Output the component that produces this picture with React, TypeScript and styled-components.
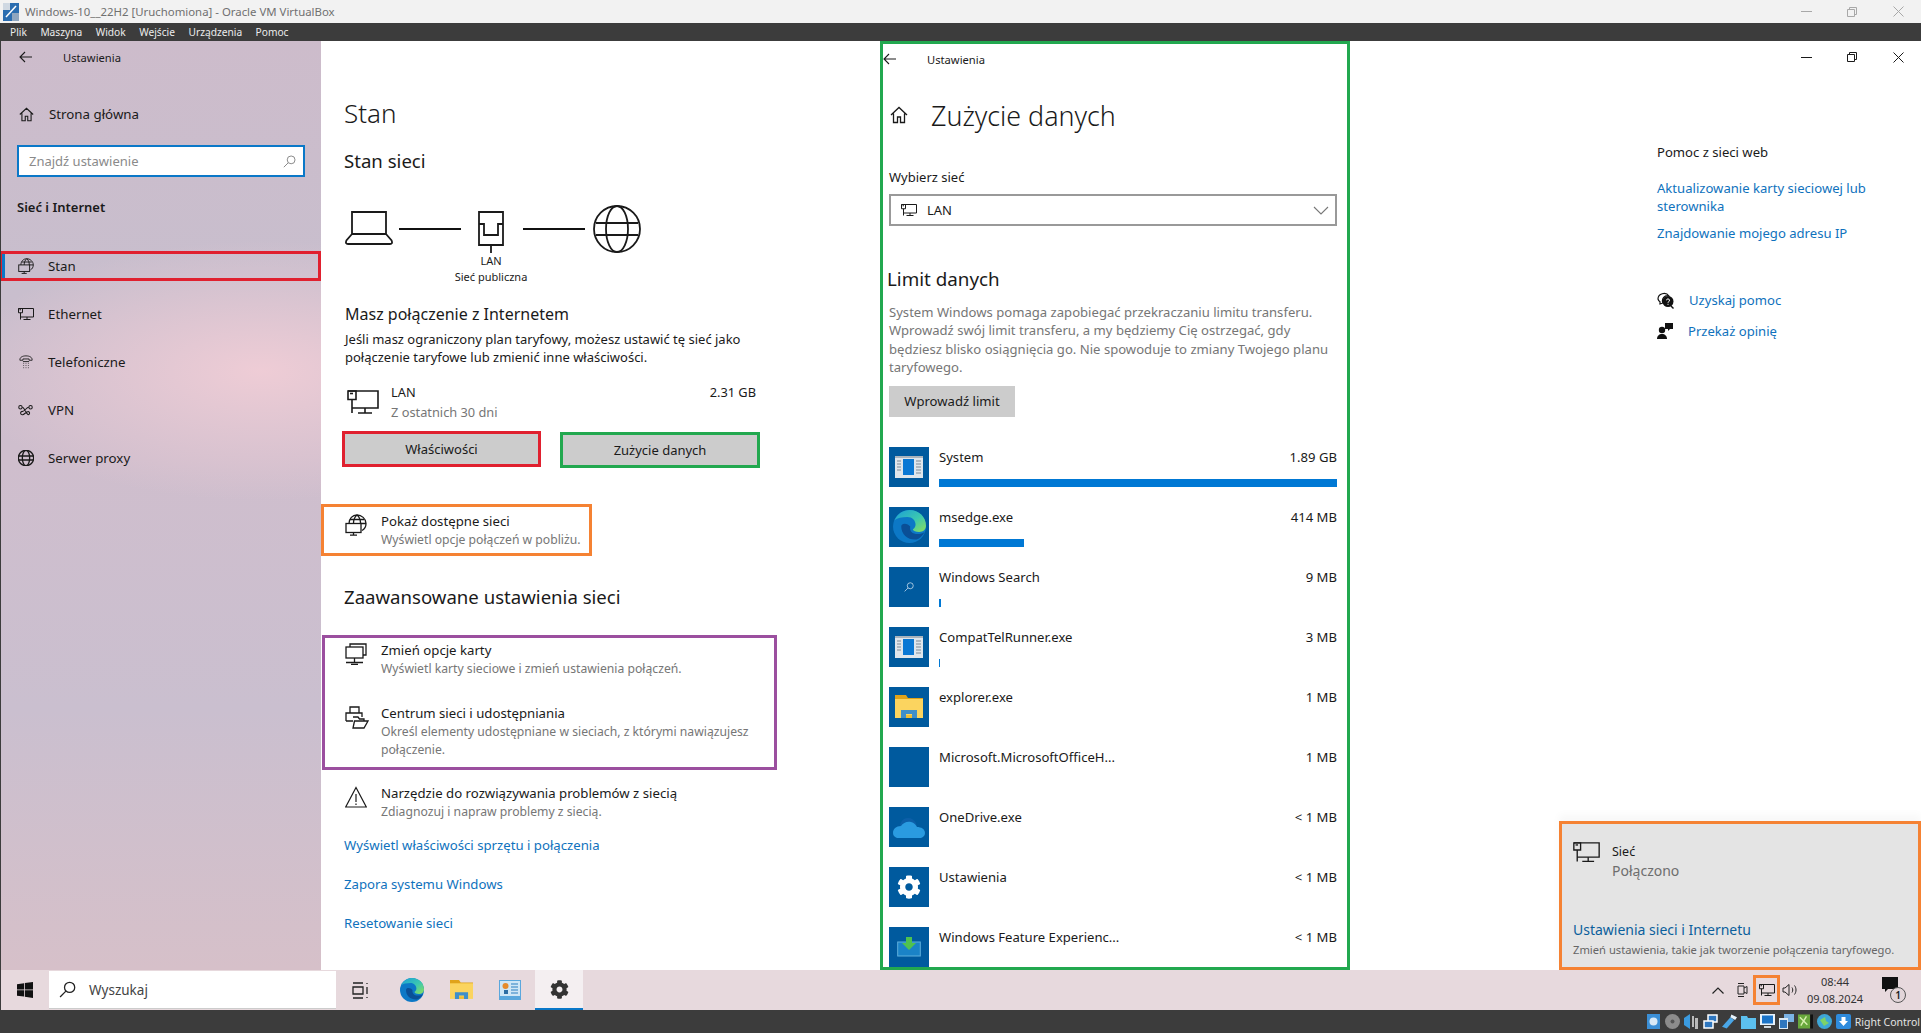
import React from 'react'
import styled, { createGlobalStyle } from 'styled-components'
import { FaCog } from 'react-icons/fa'

const FONT = `"Noto Sans", "Open Sans", "Liberation Sans", sans-serif`

const GlobalStyle = createGlobalStyle`
    html, body {
        margin: 0;
        padding: 0;
        width: 100%;
        height: 100%;
        overflow: hidden;
    }
    body {
        font-family: ${FONT};
        color: #1a1a1a;
        background: #3c3c3c;
    }
    * {
        box-sizing: border-box;
    }
    svg {
        display: block;
        flex: none;
    }
`

/* ---- VirtualBox frame ---- */
const Shell = styled.div`
    width: 1921px;
    height: 1033px;
    display: flex;
    flex-direction: column;
    overflow: hidden;
    background: #3c3c3c;
`
const TitleBar = styled.div`
    height: 23px;
    flex: none;
    background: #f2f2f2;
    color: #707070;
    display: flex;
    align-items: center;
    padding-left: 3px;
    font-size: 11.4px;
    gap: 6px;
`
const TitleText = styled.span`
    flex: 1;
`
const FrameControls = styled.div`
    display: flex;
    color: #a8a8a8;
`
const FrameControl = styled.span`
    width: 46px;
    height: 23px;
    display: flex;
    align-items: center;
    justify-content: center;
`
const MenuBar = styled.div`
    height: 18px;
    flex: none;
    background: #3c3c3c;
    color: #ececec;
    font-size: 10.2px;
    display: flex;
    align-items: center;
    gap: 13.5px;
    padding-left: 10px;
`
const Workspace = styled.div`
    flex: 1;
    min-height: 0;
    margin-left: 1px;
    display: flex;
    position: relative;
    background: #fff;
`

/* ---- settings sidebar ---- */
const Sidebar = styled.aside`
    width: 320px;
    flex: none;
    background:
        radial-gradient(ellipse 300px 130px at 260px 330px, rgba(240, 205, 214, .95), rgba(240, 205, 214, 0)),
        linear-gradient(180deg, #cdbccb 0%, #c8becd 25%, #cfbecd 45%, #cabfcf 72%, #d6c0c9 100%);
`
const SidebarHead = styled.div`
    height: 32px;
    display: flex;
    align-items: center;
    padding-left: 18px;
    font-size: 11.2px;
`
const BackSlot = styled.span`
    width: 44px;
    flex: none;
`
const HomeLink = styled.div`
    margin-top: 25px;
    height: 32px;
    display: flex;
    align-items: center;
    gap: 15px;
    padding-left: 18px;
    font-size: 13.3px;
`
const SearchBox = styled.div`
    margin: 15px 0 0 16px;
    width: 288px;
    height: 32px;
    background: #fff;
    border: 2.5px solid #0a78c8;
    display: flex;
    align-items: center;
    justify-content: space-between;
    padding: 0 7px 0 10px;
    color: #8a8a8a;
    font-size: 13px;
`
const SideGroup = styled.div`
    margin: 20px 0 0 16px;
    height: 20px;
    line-height: 20px;
    font-size: 13px;
    font-weight: 600;
`
const SideList = styled.nav`
    margin-top: 34px;
`
const SideItem = styled.div<{ $active?: boolean }>`
    height: ${p => (p.$active ? '30px' : '48px')};
    display: flex;
    align-items: center;
    gap: 14px;
    font-size: 13.3px;
    padding-left: ${p => (p.$active ? '13px' : '16px')};
    ${p => p.$active && `
        border: 3px solid #e0202f;
        border-left-width: 1px;
        margin-bottom: 9px;
        padding-left: 15px;
        position: relative;
        &::before {
            content: '';
            position: absolute;
            left: 0;
            top: 0;
            bottom: 0;
            width: 3px;
            background: #0a78c8;
        }
    `}
`
const SideIconSlot = styled.span`
    width: 17px;
    display: flex;
    justify-content: center;
    flex: none;
`

/* ---- status column ---- */
const MainPane = styled.main`
    width: 559px;
    flex: none;
`
const PageTitle = styled.h1`
    margin: 54px 0 0 23px;
    height: 36px;
    line-height: 36px;
    font-size: 26px;
    font-weight: 300;
`
const SectionTitle = styled.h2<{ $top: number }>`
    margin: ${p => p.$top}px 0 0 23px;
    height: 28px;
    line-height: 28px;
    font-size: 18.6px;
    font-weight: 400;
`
const Diagram = styled.div`
    margin: 30px 0 0 24px;
    height: 81px;
    display: flex;
    align-items: flex-start;
`
const DiagramNode = styled.div<{ $top?: number; $left: number }>`
    margin: ${p => p.$top ?? 0}px 0 0 ${p => p.$left}px;
    display: flex;
    flex-direction: column;
    align-items: center;
    width: min-content;
`
const DiagramLine = styled.span<{ $left: number }>`
    width: 62px;
    height: 2px;
    margin: 23px 0 0 ${p => p.$left}px;
    background: #111;
`
const NodeColumn = styled.div`
    width: 26px;
    display: flex;
    flex-direction: column;
    align-items: center;
`
const NodeLabel = styled.span`
    white-space: nowrap;
    font-size: 11px;
    line-height: 16px;
`
const ConnectedTitle = styled.h3`
    margin: 16px 0 0 24px;
    height: 24px;
    line-height: 24px;
    font-size: 16px;
    font-weight: 400;
`
const Description = styled.p`
    margin: 4px 0 0 24px;
    font-size: 13px;
    line-height: 18px;
    white-space: nowrap;
`
const UsageRow = styled.div`
    margin: 16px 0 0 26px;
    width: 409px;
    display: flex;
    font-size: 12.8px;
    line-height: 20px;
    gap: 12px;
`
const UsageIcon = styled.span`
    padding-top: 8px;
`
const UsageText = styled.div`
    flex: 1;
`
const Muted = styled.div`
    color: #767676;
`
const ButtonRow = styled.div`
    margin: 9px 0 0 21px;
    display: flex;
    gap: 19px;
`
const MarkedButton = styled.div<{ $tone: string; $width: number; $shift?: number }>`
    width: ${p => p.$width}px;
    height: 36px;
    margin-top: ${p => p.$shift ?? 0}px;
    background: #ccc;
    border: 3px solid ${p => p.$tone};
    display: flex;
    align-items: center;
    justify-content: center;
    font-size: 13px;
`
const OptionRow = styled.div`
    display: flex;
    gap: 14px;
`
const OptionIcon = styled.span`
    width: 22px;
    flex: none;
    padding-top: 3px;
`
const OptionTitle = styled.div`
    line-height: 20px;
    font-size: 13.2px;
    white-space: nowrap;
`
const OptionSub = styled.div`
    line-height: 18px;
    font-size: 12.2px;
    color: #767676;
    white-space: nowrap;
`
const OrangeBox = styled.div`
    margin-top: 36px;
    width: 271px;
    height: 52px;
    border: 3px solid #f58233;
    padding: 4px 0 0 21px;
`
const PurpleBox = styled.div`
    margin: 24px 0 0 1px;
    width: 455px;
    height: 135px;
    border: 3px solid #9b4f9f;
    padding: 2px 0 0 20px;
    display: flex;
    flex-direction: column;
    gap: 25px;
`
const PlainOption = styled.div`
    margin: 13px 0 0 24px;
`
const LinkStack = styled.div`
    margin: 14px 0 0 23px;
    display: flex;
    flex-direction: column;
    gap: 19px;
`
const PageLink = styled.a`
    color: #0f72bd;
    font-size: 13.2px;
    line-height: 20px;
`

/* ---- data usage window ---- */
const UsagePane = styled.section`
    width: 470px;
    flex: none;
    height: 100%;
    overflow: hidden;
    border: 3px solid #22a84f;
    padding: 0 10px 0 6px;
    font-size: 13.1px;
`
const UsageHead = styled.div`
    height: 32px;
    margin-left: -6px;
    padding-bottom: 2px;
    display: flex;
    align-items: center;
    font-size: 11.2px;
`
const UsageTitleRow = styled.div`
    margin-top: 20px;
    height: 38px;
    display: flex;
    align-items: center;
    padding-left: 1px;
    gap: 23px;
`
const UsageTitle = styled.h1`
    margin: 0;
    font-size: 26.8px;
    font-weight: 300;
`
const FieldLabel = styled.div`
    margin-top: 33px;
    line-height: 20px;
    font-size: 13px;
`
const SelectBox = styled.div`
    margin-top: 7px;
    height: 32px;
    border: 2px solid #999;
    display: flex;
    align-items: center;
    gap: 10px;
    padding: 0 6px 0 10px;
    font-size: 13px;
`
const SelectValue = styled.span`
    flex: 1;
`
const LimitTitle = styled.h2`
    margin: 39px 0 0 -2px;
    line-height: 28px;
    font-size: 18.8px;
    font-weight: 400;
`
const LimitText = styled.p`
    margin: 10px 0 0;
    color: #767676;
    font-size: 13.1px;
    line-height: 18.4px;
    white-space: nowrap;
`
const LimitButton = styled.div`
    margin-top: 9px;
    width: 126px;
    height: 31px;
    background: #ccc;
    display: flex;
    align-items: center;
    justify-content: center;
`
const AppList = styled.div`
    margin-top: 30px;
    display: flex;
    flex-direction: column;
    gap: 20px;
`
const AppRow = styled.div`
    display: flex;
    gap: 10px;
    height: 40px;
    flex: none;
`
const AppTile = styled.span`
    width: 40px;
    height: 40px;
    flex: none;
    background: #005a9e;
    display: flex;
    align-items: center;
    justify-content: center;
    color: #fff;
`
const AppBody = styled.div`
    flex: 1;
    display: flex;
    flex-direction: column;
    justify-content: space-between;
`
const AppLine = styled.div`
    display: flex;
    justify-content: space-between;
    line-height: 20px;
`
const AppBar = styled.div`
    height: 8px;
    background: #0078d4;
`

/* ---- help column ---- */
const HelpPane = styled.aside`
    flex: 1;
    min-width: 0;
    font-size: 13.1px;
`
const WindowControls = styled.div`
    height: 32px;
    display: flex;
    justify-content: flex-end;
`
const WindowControl = styled.span`
    width: 46px;
    display: flex;
    align-items: center;
    justify-content: center;
`
const HelpColumn = styled.div`
    margin: 69px 0 0 307px;
    width: 230px;
`
const HelpHeading = styled.div`
    line-height: 20px;
    margin-bottom: 17px;
`
const HelpLink = styled.a`
    display: block;
    color: #0f72bd;
    line-height: 18px;
    margin-bottom: 9px;
`
const HelpActions = styled.div`
    margin-top: 48px;
    display: flex;
    flex-direction: column;
    gap: 11px;
`
const HelpAction = styled.div`
    display: flex;
    align-items: center;
    gap: 15px;
    height: 20px;
    color: #0f72bd;
`

/* ---- network flyout ---- */
const Flyout = styled.div`
    position: absolute;
    right: 0;
    bottom: 0;
    width: 362px;
    height: 149px;
    border: 3px solid #f58233;
    background: #e4e4e4;
    box-shadow: 0 -6px 8px rgba(0, 0, 0, .03);
    padding: 0 0 0 11px;
    display: flex;
    flex-direction: column;
`
const FlyoutTop = styled.div`
    margin-top: 18px;
    display: flex;
    gap: 12px;
`
const FlyoutName = styled.div`
    font-size: 12.5px;
    line-height: 19px;
`
const FlyoutState = styled.div`
    font-size: 14px;
    line-height: 20px;
    color: #6e6e6e;
`
const FlyoutLink = styled.a`
    margin-top: auto;
    color: #0b5f9c;
    font-size: 14px;
    line-height: 20px;
`
const FlyoutHint = styled.div`
    margin: 0 0 7px;
    color: #666;
    font-size: 11.2px;
    line-height: 20px;
    white-space: nowrap;
`

/* ---- windows taskbar ---- */
const Taskbar = styled.footer`
    height: 40px;
    flex: none;
    margin-left: 1px;
    background: #e7d9dd;
    display: flex;
    align-items: center;
`
const StartButton = styled.span`
    width: 48px;
    display: flex;
    justify-content: center;
`
const TaskSearch = styled.div`
    width: 287px;
    height: 38px;
    background: #fff;
    border-bottom: 1px solid #ccc;
    display: flex;
    align-items: center;
    gap: 13px;
    padding-left: 10px;
    color: #444;
    font-size: 13.5px;
`
const TaskIcons = styled.div`
    margin-left: 4px;
    display: flex;
    gap: 1px;
`
const TaskIcon = styled.span<{ $active?: boolean }>`
    width: 48px;
    height: 40px;
    display: flex;
    align-items: center;
    justify-content: center;
    color: #333;
    ${p => p.$active && `
        background: #f4eff1;
        border-bottom: 2px solid #0a78c8;
    `}
`
const Tray = styled.div`
    margin-left: auto;
    display: flex;
    align-items: center;
    height: 40px;
    padding-right: 3px;
`
const TrayIcon = styled.span<{ $left: number }>`
    margin-left: ${p => p.$left}px;
    color: #222;
`
const TrayMark = styled.span`
    margin-left: 5px;
    width: 27px;
    height: 30px;
    border: 3px solid #f58233;
    display: flex;
    align-items: center;
    justify-content: center;
`
const Clock = styled.div`
    margin-left: 8px;
    width: 58px;
    text-align: center;
    font-size: 11px;
    line-height: 17px;
    color: #333;
`
const NoticeSlot = styled.span`
    margin: 0 12px 0 18px;
    position: relative;
    width: 24px;
    height: 26px;
`
const NoticeBadge = styled.span`
    position: absolute;
    right: 0;
    bottom: 0;
    width: 16px;
    height: 16px;
    border-radius: 50%;
    border: 1px solid #555;
    background: #e2d5d9;
    display: flex;
    align-items: center;
    justify-content: center;
    font-size: 10px;
    font-weight: 600;
`

/* ---- VirtualBox status bar ---- */
const StatusBar = styled.div`
    height: 23px;
    flex: none;
    background: #3c3c3c;
    display: flex;
    align-items: center;
    justify-content: flex-end;
    gap: 4px;
    color: #e4e4e4;
    font-size: 10.5px;
    padding-right: 1px;
`
const HostKey = styled.span`
    white-space: nowrap;
`

type IconProps = { w: number; h?: number }

const BackArrow = () => (
    <svg width="13" height="12" viewBox="0 0 13 12" fill="none" stroke="currentColor" strokeWidth="1.1">
        <path d="M13 6H1M6 1L1 6l5 5" />
    </svg>
)
const HomeIcon = ({ w }: IconProps) => (
    <svg width={w} height={w} viewBox="0 0 18 18" fill="none" stroke="currentColor" strokeWidth="1.3">
        <path d="M1 9L9 1.5 17 9M3.5 7.5V16.5H7.5V11H10.5V16.5H14.5V7.5" />
    </svg>
)
const SearchGlyph = ({ w, color }: IconProps & { color: string }) => (
    <svg width={w} height={w} viewBox="0 0 16 16" fill="none" stroke={color} strokeWidth="1.2">
        <circle cx="10" cy="6" r="4.8" />
        <path d="M6.5 9.5L1 15" />
    </svg>
)
const StatusIcon = ({ w }: IconProps) => (
    <svg width={w} height={w} viewBox="0 0 22 22" fill="none" stroke="currentColor" strokeWidth="1.3">
        <path d="M4 9.5C4 4.5 7.5 1 12 1s9 3.5 9 8.500c0 3-1.400 5.600-4 7" />
        <path d="M5 5.500h14M12 1c-2.500 2-3.500 5-3.500 8.500M12 1c2.500 2 3.500 5 3.500 8.500M16 9.500h5" />
        <rect x="1" y="9.500" width="15" height="9" />
        <path d="M8.500 18.500V21M5 21.200h7" />
    </svg>
)
const EthernetIcon = ({ w }: IconProps) => (
    <svg width={w} height={(w * 24) / 32} viewBox="0 0 32 24" fill="none" stroke="currentColor" strokeWidth={w > 20 ? 1.6 : 2}>
        <path d="M1 1H31V18H5" />
        <path d="M1 1H9V9.500H1zM5 9.500V23M18 18V23M11 23H25" />
        <path d="M3 3.500h3" />
    </svg>
)
const DialIcon = ({ w }: IconProps) => (
    <svg width={w} height={w} viewBox="0 0 16 16" fill="none" stroke="currentColor" strokeWidth="1">
        <path d="M1 5.500C1 2.500 4 1 8 1s7 1.500 7 4.500V6h-3.500V4.500h-7V6H1z" />
        <path d="M4.500 7.500h7M5 9.500h.8M7.600 9.500h.8M10.200 9.500h.8M5 12h.8M7.600 12h.8M10.200 12h.8M5 14.500h.8M7.600 14.500h.8M10.200 14.500h.8" />
    </svg>
)
const VpnIcon = ({ w }: IconProps) => (
    <svg width={w} height={w} viewBox="0 0 16 16" fill="none" stroke="currentColor" strokeWidth="1.1">
        <circle cx="2.600" cy="4.500" r="1.800" />
        <circle cx="13.400" cy="4.500" r="1.800" />
        <path d="M4.500 4.500C7 4.500 9 12.500 11 12.500a1.800 1.800 0 0 0 0-3.500C9 9 6.500 12.500 5 12.500a1.800 1.800 0 1 1 0-3.500C7 9 9 4.500 11.500 4.500" />
    </svg>
)
const GlobeIcon = ({ w, sw }: IconProps & { sw: number }) => (
    <svg width={w} height={w} viewBox="0 0 48 48" fill="none" stroke="currentColor" strokeWidth={sw}>
        <circle cx="24" cy="24" r="23" />
        <ellipse cx="24" cy="24" rx="11" ry="23" />
        <path d="M3 18H45M3 30H45" />
    </svg>
)
const LaptopIcon = () => (
    <svg width="48" height="34" viewBox="0 0 48 34" fill="none" stroke="currentColor" strokeWidth="1.8">
        <path d="M7 1H41V23H7z" />
        <path d="M7 23L1.400 29.500Q0 33 3 33H45Q48 33 46.600 29.500L41 23" />
    </svg>
)
const AdapterIcon = () => (
    <svg width="26" height="42" viewBox="0 0 26 42" fill="none" stroke="currentColor" strokeWidth="1.8">
        <path d="M1 1H25V34H1zM1 13H6V24H20V13H25M13 34V42" />
    </svg>
)
const AdapterOptionsIcon = ({ w }: IconProps) => (
    <svg width={w} height={w} viewBox="0 0 22 22" fill="none" stroke="currentColor" strokeWidth="1.3">
        <path d="M5 4V1H21V12H18" />
        <rect x="1" y="4" width="17" height="11" />
        <path d="M9.500 15V19M1 19.500H18M6 21.500H13" />
    </svg>
)
const SharingIcon = ({ w }: IconProps) => (
    <svg width={w} height={w} viewBox="0 0 24 24" fill="none" stroke="currentColor" strokeWidth="1.3">
        <path d="M5 7V1H14V7M1 15V7H17V11M1 15H8" />
        <path d="M8 11H13L14.500 13H19V15H9.500L8 22H19L23 15H19" />
    </svg>
)
const WarningIcon = ({ w }: IconProps) => (
    <svg width={w} height={w} viewBox="0 0 22 22" fill="none" stroke="currentColor" strokeWidth="1.2">
        <path d="M11 1.500L21.300 21H.7zM11 8v8M11 17.500v1.600" />
    </svg>
)
const ChevronIcon = () => (
    <svg width="16" height="9" viewBox="0 0 16 9" fill="none" stroke="#777" strokeWidth="1.1">
        <path d="M1 1l7 7 7-7" />
    </svg>
)
const AppWindowIcon = () => (
    <svg width="28" height="22" viewBox="0 0 28 22">
        <rect width="28" height="22" fill="#dfe6ec" />
        <rect width="28" height="2" fill="#aab4bd" />
        <rect x="8" y="3" width="11" height="16" fill="#0a78d4" />
        <path d="M2 5h4M2 8h4M2 11h4M2 14h4M21 5h5M21 8h5M21 11h5M21 14h5M21 17h5" stroke="#7f8b96" strokeWidth="1" />
    </svg>
)
const EdgeLogo = ({ w }: IconProps) => (
    <svg width={w} height={w} viewBox="0 0 24 24">
        <defs>
            <linearGradient id="edgeTop" x1="0" y1="0" x2="1" y2="1">
                <stop offset="0" stopColor="#1b9ed8" />
                <stop offset=".55" stopColor="#3bc8b0" />
                <stop offset="1" stopColor="#8ee05a" />
            </linearGradient>
        </defs>
        <circle cx="12" cy="12" r="12" fill="#0c78c6" />
        <path d="M1 7.500C3.500 2.500 7.500 0 12 0c7 0 12 5 12 11.500 0 2.600-2 4.500-5 4.500-2.500 0-4.300-.8-4.600-2 1.300-.8 2-2 2-3.500C16.400 7.500 14 5 10.500 5 6.500 5 3 5.700 1 7.500z" fill="url(#edgeTop)" />
        <path d="M6 12c0 6 5 10 11 9.500 2-.5 4.500-2.500 6-5.500-1.500 1-3 1.500-5 1.500-4 0-6-2-5.500-5.500C11 9.500 6 9 6 12z" fill="#0a4f96" />
    </svg>
)
const FolderLogo = ({ w }: IconProps) => (
    <svg width={w} height={(w * 24) / 28} viewBox="0 0 28 24">
        <path d="M0 0H11L13 3H28V5H0z" fill="#e0a31a" />
        <path d="M0 4H28V23H0z" fill="#fbd45f" />
        <path d="M6 23V15H22V23H17V19H11V23z" fill="#3f8fca" />
        <rect x="11" y="20" width="6" height="3" fill="#f0bd34" />
    </svg>
)
const CloudLogo = () => (
    <svg width="32" height="22" viewBox="0 0 32 22">
        <path d="M7 14C6 8 9 2 15 2c4 0 6 2 8 5l1 6z" fill="#0c5fa8" />
        <path d="M0 17c0-4 3-7 8-7 2-3 6-5 10-4 3 .5 5 3 6 5 4 0 8 2 8 6 0 3-2 4-4 5H4c-2-1-4-2-4-5z" fill="#2a9be0" />
    </svg>
)
const FeatureLogo = () => (
    <svg width="24" height="20" viewBox="0 0 24 20" fill="none">
        <rect x=".7" y="5" width="22.600" height="14" fill="#1a83c7" stroke="#5fb0dc" strokeWidth="1" />
        <path d="M9 0h6v6h4l-7 7-7-7h4z" fill="#4fc24f" />
    </svg>
)
const ControlPanelLogo = () => (
    <svg width="22" height="20" viewBox="0 0 22 20">
        <rect width="22" height="20" fill="#5aa7dd" />
        <rect x="1" y="1" width="20" height="15" fill="#cfe6f6" />
        <circle cx="6.500" cy="6" r="3" fill="#e58b2d" />
        <rect x="5" y="10" width="4" height="4" fill="#2c6da4" />
        <path d="M12 4h7M12 7h7M12 10h7M12 13h7" stroke="#2c7fc0" strokeWidth="1.2" />
    </svg>
)
const WindowsLogo = () => (
    <svg width="16" height="16" viewBox="0 0 16 16" fill="#111">
        <path d="M0 2.300L7 1.300V7.500H0zM7.800 1.100L16 0V7.500H7.800zM0 8.300H7V14.600L0 13.700zM7.800 8.300H16V16L7.800 14.800z" />
    </svg>
)
const TaskViewIcon = () => (
    <svg width="17" height="17" viewBox="0 0 17 17" fill="none" stroke="#222" strokeWidth="1.3">
        <path d="M1 1H11M1 16H11M1 5H11V12H1zM15 1v1M15 5v7M15 15v1" />
    </svg>
)
const HelpChatIcon = () => (
    <svg width="17" height="17" viewBox="0 0 17 17">
        <path d="M1 7a6 5.500 0 0 1 11-3 5 5 0 0 0-6 7L3 12V9.800A5 5 0 0 1 1 7z" fill="none" stroke="#111" strokeWidth="1.2" />
        <circle cx="11" cy="9.500" r="5.500" fill="#111" />
        <path d="M14 14l2.500 2.500" stroke="#111" strokeWidth="1.4" />
        <path d="M9.500 8.300a1.500 1.500 0 1 1 2 1.500c-.5.200-.5.500-.5 1M11 11.800v1" stroke="#fff" strokeWidth="1" fill="none" />
    </svg>
)
const FeedbackIcon = () => (
    <svg width="16" height="16" viewBox="0 0 16 16" fill="#111">
        <circle cx="5" cy="7" r="3.200" />
        <path d="M0 16c0-3 2-5 5-5s5 2 5 5z" />
        <path d="M8 0h8v6h-3l-2 2V6H8z" />
    </svg>
)
const MinimizeGlyph = () => (
    <svg width="11" height="1" viewBox="0 0 11 1"><rect width="11" height="1" fill="currentColor" /></svg>
)
const RestoreGlyph = () => (
    <svg width="10" height="10" viewBox="0 0 10 10" fill="none" stroke="currentColor">
        <path d="M.5 2.500h7v7h-7zM2.500 2.500v-2h7v7h-2" />
    </svg>
)
const CloseGlyph = () => (
    <svg width="11" height="11" viewBox="0 0 11 11" fill="none" stroke="currentColor">
        <path d="M.5.500l10 10M10.500.500l-10 10" />
    </svg>
)
const VmLogo = () => (
    <svg width="16" height="18" viewBox="0 0 16 18">
        <rect width="16" height="18" fill="#2a6db0" />
        <path d="M0 0h7v7H0z" fill="#cfd8e2" />
        <path d="M9 10h7v8H9z" fill="#8fa6bf" />
        <path d="M3 14L13 3" stroke="#fff" strokeWidth="1.5" />
    </svg>
)
const VmStatusIcons = () => (
    <>
        <svg width="15" height="15" viewBox="0 0 15 15"><rect x="1" width="13" height="15" fill="#3b8fd6" /><circle cx="7.500" cy="7.500" r="4" fill="#d8e9f6" /></svg>
        <svg width="15" height="15" viewBox="0 0 15 15"><circle cx="7.500" cy="7.500" r="7.500" fill="#8c8c8c" /><circle cx="7.500" cy="7.500" r="2" fill="#555" /></svg>
        <svg width="15" height="15" viewBox="0 0 15 15"><path d="M0 4L6 0v15L0 11z" fill="#3b9be0" /><rect x="8" y="2" width="2" height="11" fill="#bbb" /><rect x="11" y="4" width="3" height="11" fill="#bbb" /></svg>
        <svg width="15" height="15" viewBox="0 0 15 15" fill="none" stroke="#fff" strokeWidth="1.5"><rect x="5" y="1" width="9" height="7" fill="#2f77bf" /><rect x="1" y="7" width="9" height="7" fill="#2f77bf" /></svg>
        <svg width="15" height="15" viewBox="0 0 16 15"><path d="M0 13L9 3l4 3-8 9z" fill="#4aa6e6" /><path d="M10 0l6 3-2 3-5-3z" fill="#e8f4fc" /></svg>
        <svg width="15" height="15" viewBox="0 0 15 15"><path d="M0 2h6l1 2h8v11H0z" fill="#5cc0ee" /></svg>
        <svg width="15" height="15" viewBox="0 0 15 15"><rect width="15" height="11" fill="#e8f2fa" /><rect x="2" y="1.500" width="11" height="8" fill="#1b74c8" /><rect x="4" y="12" width="7" height="2" fill="#d0d8de" /></svg>
        <svg width="15" height="15" viewBox="0 0 15 15"><rect x="5" width="10" height="8" fill="#7ab2e4" /><rect y="4" width="9" height="11" fill="#dbe9f5" /><rect x="1" y="6" width="7" height="8" fill="#2f77bf" /></svg>
        <svg width="15" height="15" viewBox="0 0 16 15"><rect width="13" height="15" fill="#68a83c" /><path d="M2 3l8 8M9 2L3 12" stroke="#d8f0b0" strokeWidth="1.5" /><rect x="13" width="3" height="15" fill="#111" /></svg>
        <svg width="15" height="15" viewBox="0 0 15 15"><circle cx="7.500" cy="7.500" r="7.500" fill="#3ea7d8" /><path d="M3 6l5-3 1 4 3 2-5 3z" fill="#7ed268" /></svg>
        <svg width="15" height="15" viewBox="0 0 15 15"><rect width="15" height="15" rx="2" fill="#2e8bdc" /><path d="M5.500 3h4v4h2.500l-4.500 5L3 7h2.500z" fill="#fff" /></svg>
    </>
)

const apps = [
    { name: 'System', size: '1.89 GB', bar: 398, tile: <AppWindowIcon /> },
    { name: 'msedge.exe', size: '414 MB', bar: 85, tile: <EdgeLogo w={33} /> },
    { name: 'Windows Search', size: '9 MB', bar: 2, tile: <SearchGlyph w={10} color="#cfe2f2" /> },
    { name: 'CompatTelRunner.exe', size: '3 MB', bar: 1, tile: <AppWindowIcon /> },
    { name: 'explorer.exe', size: '1 MB', tile: <FolderLogo w={28} /> },
    { name: 'Microsoft.MicrosoftOfficeH...', size: '1 MB' },
    { name: 'OneDrive.exe', size: '< 1 MB', tile: <CloudLogo /> },
    { name: 'Ustawienia', size: '< 1 MB', tile: <FaCog size={24} /> },
    { name: 'Windows Feature Experienc...', size: '< 1 MB', tile: <FeatureLogo /> },
]

function App() {
    return (
        <>
            <GlobalStyle />
            <Shell>
                <TitleBar>
                    <VmLogo />
                    <TitleText>Windows-10__22H2 [Uruchomiona] - Oracle VM VirtualBox</TitleText>
                    <FrameControls>
                        <FrameControl><MinimizeGlyph /></FrameControl>
                        <FrameControl><RestoreGlyph /></FrameControl>
                        <FrameControl><CloseGlyph /></FrameControl>
                    </FrameControls>
                </TitleBar>
                <MenuBar>
                    <span>Plik</span>
                    <span>Maszyna</span>
                    <span>Widok</span>
                    <span>Wejście</span>
                    <span>Urządzenia</span>
                    <span>Pomoc</span>
                </MenuBar>
                <Workspace>
                    <Sidebar>
                        <SidebarHead>
                            <BackSlot><BackArrow /></BackSlot>
                            Ustawienia
                        </SidebarHead>
                        <HomeLink><HomeIcon w={15} />Strona główna</HomeLink>
                        <SearchBox>
                            Znajdź ustawienie
                            <SearchGlyph w={13} color="#888" />
                        </SearchBox>
                        <SideGroup>Sieć i Internet</SideGroup>
                        <SideList>
                            <SideItem $active>
                                <SideIconSlot><StatusIcon w={16} /></SideIconSlot>Stan
                            </SideItem>
                            <SideItem><SideIconSlot><EthernetIcon w={16} /></SideIconSlot>Ethernet</SideItem>
                            <SideItem><SideIconSlot><DialIcon w={14} /></SideIconSlot>Telefoniczne</SideItem>
                            <SideItem><SideIconSlot><VpnIcon w={15} /></SideIconSlot>VPN</SideItem>
                            <SideItem><SideIconSlot><GlobeIcon w={16} sw={4} /></SideIconSlot>Serwer proxy</SideItem>
                        </SideList>
                    </Sidebar>

                    <MainPane>
                        <PageTitle>Stan</PageTitle>
                        <SectionTitle $top={16}>Stan sieci</SectionTitle>
                        <Diagram>
                            <DiagramNode $top={6} $left={0}><LaptopIcon /></DiagramNode>
                            <DiagramLine $left={6} />
                            <DiagramNode $top={6} $left={17}>
                                <NodeColumn>
                                    <AdapterIcon />
                                    <NodeLabel>LAN</NodeLabel>
                                    <NodeLabel>Sieć publiczna</NodeLabel>
                                </NodeColumn>
                            </DiagramNode>
                            <DiagramLine $left={19} />
                            <DiagramNode $left={8}><GlobeIcon w={48} sw={1.8} /></DiagramNode>
                        </Diagram>
                        <ConnectedTitle>Masz połączenie z Internetem</ConnectedTitle>
                        <Description>
                            Jeśli masz ograniczony plan taryfowy, możesz ustawić tę sieć jako<br />
                            połączenie taryfowe lub zmienić inne właściwości.
                        </Description>
                        <UsageRow>
                            <UsageIcon><EthernetIcon w={32} /></UsageIcon>
                            <UsageText>
                                <div>LAN</div>
                                <Muted>Z ostatnich 30 dni</Muted>
                            </UsageText>
                            <span>2.31 GB</span>
                        </UsageRow>
                        <ButtonRow>
                            <MarkedButton $tone="#e0202f" $width={199}>Właściwości</MarkedButton>
                            <MarkedButton $tone="#22a84f" $width={200} $shift={1}>Zużycie danych</MarkedButton>
                        </ButtonRow>
                        <OrangeBox>
                            <OptionRow>
                                <OptionIcon><StatusIcon w={22} /></OptionIcon>
                                <div>
                                    <OptionTitle>Pokaż dostępne sieci</OptionTitle>
                                    <OptionSub>Wyświetl opcje połączeń w pobliżu.</OptionSub>
                                </div>
                            </OptionRow>
                        </OrangeBox>
                        <SectionTitle $top={27}>Zaawansowane ustawienia sieci</SectionTitle>
                        <PurpleBox>
                            <OptionRow>
                                <OptionIcon><AdapterOptionsIcon w={22} /></OptionIcon>
                                <div>
                                    <OptionTitle>Zmień opcje karty</OptionTitle>
                                    <OptionSub>Wyświetl karty sieciowe i zmień ustawienia połączeń.</OptionSub>
                                </div>
                            </OptionRow>
                            <OptionRow>
                                <OptionIcon><SharingIcon w={24} /></OptionIcon>
                                <div>
                                    <OptionTitle>Centrum sieci i udostępniania</OptionTitle>
                                    <OptionSub>
                                        Określ elementy udostępniane w sieciach, z którymi nawiązujesz<br />
                                        połączenie.
                                    </OptionSub>
                                </div>
                            </OptionRow>
                        </PurpleBox>
                        <PlainOption>
                            <OptionRow>
                                <OptionIcon><WarningIcon w={22} /></OptionIcon>
                                <div>
                                    <OptionTitle>Narzędzie do rozwiązywania problemów z siecią</OptionTitle>
                                    <OptionSub>Zdiagnozuj i napraw problemy z siecią.</OptionSub>
                                </div>
                            </OptionRow>
                        </PlainOption>
                        <LinkStack>
                            <PageLink>Wyświetl właściwości sprzętu i połączenia</PageLink>
                            <PageLink>Zapora systemu Windows</PageLink>
                            <PageLink>Resetowanie sieci</PageLink>
                        </LinkStack>
                    </MainPane>

                    <UsagePane>
                        <UsageHead>
                            <BackSlot><BackArrow /></BackSlot>
                            Ustawienia
                        </UsageHead>
                        <UsageTitleRow>
                            <HomeIcon w={18} />
                            <UsageTitle>Zużycie danych</UsageTitle>
                        </UsageTitleRow>
                        <FieldLabel>Wybierz sieć</FieldLabel>
                        <SelectBox>
                            <EthernetIcon w={16} />
                            <SelectValue>LAN</SelectValue>
                            <ChevronIcon />
                        </SelectBox>
                        <LimitTitle>Limit danych</LimitTitle>
                        <LimitText>
                            System Windows pomaga zapobiegać przekraczaniu limitu transferu.<br />
                            Wprowadź swój limit transferu, a my będziemy Cię ostrzegać, gdy<br />
                            będziesz blisko osiągnięcia go. Nie spowoduje to zmiany Twojego planu<br />
                            taryfowego.
                        </LimitText>
                        <LimitButton>Wprowadź limit</LimitButton>
                        <AppList>
                            {apps.map(app => (
                                <AppRow key={app.name}>
                                    <AppTile>{app.tile}</AppTile>
                                    <AppBody>
                                        <AppLine>
                                            <span>{app.name}</span>
                                            <span>{app.size}</span>
                                        </AppLine>
                                        {app.bar && <AppBar style={{ width: app.bar }} />}
                                    </AppBody>
                                </AppRow>
                            ))}
                        </AppList>
                    </UsagePane>

                    <HelpPane>
                        <WindowControls>
                            <WindowControl><MinimizeGlyph /></WindowControl>
                            <WindowControl><RestoreGlyph /></WindowControl>
                            <WindowControl><CloseGlyph /></WindowControl>
                        </WindowControls>
                        <HelpColumn>
                            <HelpHeading>Pomoc z sieci web</HelpHeading>
                            <HelpLink>Aktualizowanie karty sieciowej lub<br />sterownika</HelpLink>
                            <HelpLink>Znajdowanie mojego adresu IP</HelpLink>
                            <HelpActions>
                                <HelpAction><HelpChatIcon />Uzyskaj pomoc</HelpAction>
                                <HelpAction><FeedbackIcon />Przekaż opinię</HelpAction>
                            </HelpActions>
                        </HelpColumn>
                    </HelpPane>

                    <Flyout>
                        <FlyoutTop>
                            <EthernetIcon w={27} />
                            <div>
                                <FlyoutName>Sieć</FlyoutName>
                                <FlyoutState>Połączono</FlyoutState>
                            </div>
                        </FlyoutTop>
                        <FlyoutLink>Ustawienia sieci i Internetu</FlyoutLink>
                        <FlyoutHint>Zmień ustawienia, takie jak tworzenie połączenia taryfowego.</FlyoutHint>
                    </Flyout>
                </Workspace>

                <Taskbar>
                    <StartButton><WindowsLogo /></StartButton>
                    <TaskSearch>
                        <SearchGlyph w={17} color="#222" />
                        Wyszukaj
                    </TaskSearch>
                    <TaskIcon><TaskViewIcon /></TaskIcon>
                    <TaskIcons>
                        <TaskIcon><EdgeLogo w={24} /></TaskIcon>
                        <TaskIcon><FolderLogo w={23} /></TaskIcon>
                        <TaskIcon><ControlPanelLogo /></TaskIcon>
                        <TaskIcon $active><FaCog size={19} /></TaskIcon>
                    </TaskIcons>
                    <Tray>
                        <TrayIcon $left={0}>
                            <svg width="12" height="7" viewBox="0 0 12 7" fill="none" stroke="currentColor" strokeWidth="1.2"><path d="M.5 6.500L6 1l5.500 5.500" /></svg>
                        </TrayIcon>
                        <TrayIcon $left={13}>
                            <svg width="11" height="16" viewBox="0 0 11 16" fill="none" stroke="currentColor"><path d="M1 1.500h6M1 14.500h6M1 4v8h6V4zM7 6l3-1.500v7L7 10" /></svg>
                        </TrayIcon>
                        <TrayMark><EthernetIcon w={16} /></TrayMark>
                        <TrayIcon $left={2}>
                            <svg width="16" height="14" viewBox="0 0 16 14" fill="none" stroke="currentColor"><path d="M1 5v4h2l4 3.500v-11L3 5zM10 4.500c1 1.500 1 3.500 0 5M12.500 2.500c2 2.500 2 6.500 0 9" /></svg>
                        </TrayIcon>
                        <Clock>08:44<br />09.08.2024</Clock>
                        <NoticeSlot>
                            <svg width="16" height="17" viewBox="0 0 16 17" fill="#111"><path d="M0 0H16V12H6L3 15V12H0z" /></svg>
                            <NoticeBadge>1</NoticeBadge>
                        </NoticeSlot>
                    </Tray>
                </Taskbar>
                <StatusBar>
                    <VmStatusIcons />
                    <HostKey>Right Control</HostKey>
                </StatusBar>
            </Shell>
        </>
    )
}

export default App
